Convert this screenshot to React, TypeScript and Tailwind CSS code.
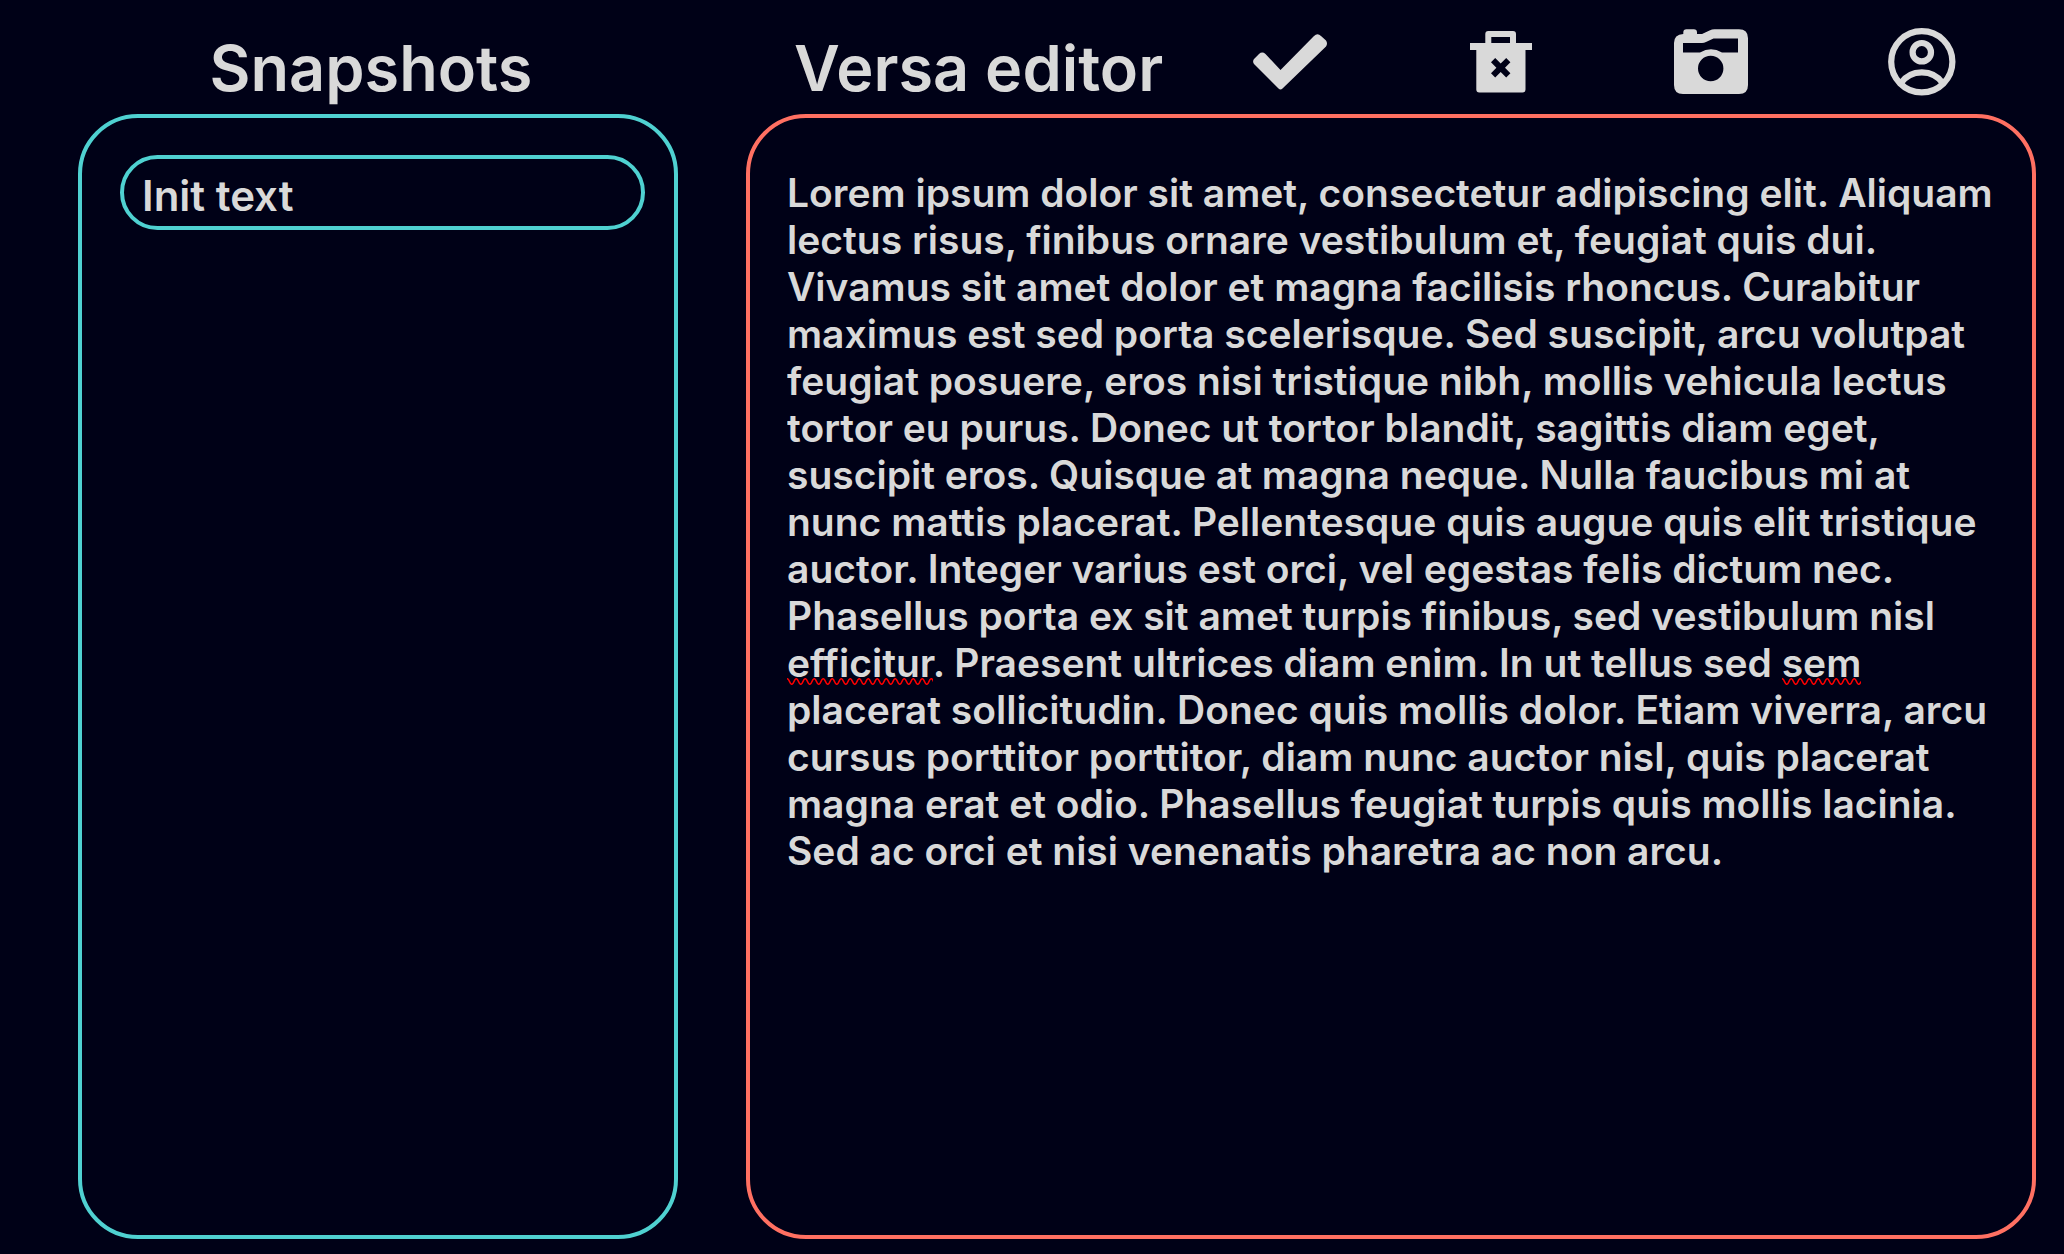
import { useLayoutEffect, useRef, useState } from "react";
import type { ReactNode } from "react";

const INITIAL_TEXT =
  "Lorem ipsum dolor sit amet, consectetur adipiscing elit. Aliquam lectus risus, finibus ornare vestibulum et, feugiat quis dui. Vivamus sit amet dolor et magna facilisis rhoncus. Curabitur maximus est sed porta scelerisque. Sed suscipit, arcu volutpat feugiat posuere, eros nisi tristique nibh, mollis vehicula lectus tortor eu purus. Donec ut tortor blandit, sagittis diam eget, suscipit eros. Quisque at magna neque. Nulla faucibus mi at nunc mattis placerat. Pellentesque quis augue quis elit tristique auctor. Integer varius est orci, vel egestas felis dictum nec. Phasellus porta ex sit amet turpis finibus, sed vestibulum nisl efficitur. Praesent ultrices diam enim. In ut tellus sed sem placerat sollicitudin. Donec quis mollis dolor. Etiam viverra, arcu cursus porttitor porttitor, diam nunc auctor nisl, quis placerat magna erat et odio. Phasellus feugiat turpis quis mollis lacinia. Sed ac orci et nisi venenatis pharetra ac non arcu.";

const MISSPELLED = ["efficitur", "sem"];

type Mark = { left: number; top: number; width: number };

/* Lays the text out in a throwaway copy of the textarea to find where each word sits. */
function measureWords(area: HTMLTextAreaElement, text: string): Mark[] {
  const copy = document.createElement("div");
  copy.className = area.className;
  copy.style.position = "absolute";
  copy.style.visibility = "hidden";
  copy.style.whiteSpace = "pre-wrap";
  copy.style.width = `${area.clientWidth}px`;
  copy.textContent = text;
  area.parentElement!.appendChild(copy);
  const origin = copy.getBoundingClientRect();
  const node = copy.firstChild;
  const marks: Mark[] = [];
  if (node) {
    for (const word of MISSPELLED) {
      const match = new RegExp(`\\b${word}\\b`).exec(text);
      if (!match) continue;
      const range = document.createRange();
      range.setStart(node, match.index);
      range.setEnd(node, match.index + word.length);
      const box = range.getBoundingClientRect();
      marks.push({ left: box.left - origin.left, top: box.bottom - origin.top, width: box.width });
    }
  }
  copy.remove();
  return marks;
}

function Squiggle({ mark }: { mark: Mark }) {
  const waves = Array.from({ length: Math.ceil(mark.width / 9) }, () => "q2.25 -5.5 4.5 0 t4.5 0").join(" ");
  return (
    <svg
      aria-hidden="true"
      className="pointer-events-none absolute -mt-2 h-[7px]"
      style={{ left: mark.left, top: mark.top, width: mark.width }}
    >
      <path d={`M-2 3.5 ${waves}`} fill="none" stroke="#f00" strokeWidth="1.6" />
    </svg>
  );
}

function Editor() {
  const [text, setText] = useState(INITIAL_TEXT);
  const [marks, setMarks] = useState<Mark[]>([]);
  const ref = useRef<HTMLTextAreaElement>(null);

  useLayoutEffect(() => {
    const update = () => ref.current && setMarks(measureWords(ref.current, text));
    update();
    window.addEventListener("resize", update);
    return () => window.removeEventListener("resize", update);
  }, [text]);

  return (
    <div className="relative flex flex-1">
      <textarea
        ref={ref}
        aria-label="Versa editor"
        spellCheck={false}
        value={text}
        onChange={(e) => setText(e.target.value)}
        className="block w-full resize-none bg-transparent text-[39px] leading-[47px] font-semibold outline-none [font-variant-ligatures:none]"
      />
      {marks.map((mark, i) => (
        <Squiggle key={i} mark={mark} />
      ))}
    </div>
  );
}

function IconButton({ label, children }: { label: string; children: ReactNode }) {
  return (
    <button type="button" aria-label={label} className="flex cursor-pointer justify-center">
      <svg viewBox="0 0 100 90" className="h-[90px] w-[100px]" fill="currentColor" aria-hidden="true">
        {children}
      </svg>
    </button>
  );
}

function Toolbar() {
  return (
    <div className="grid flex-1 grid-cols-4 pt-5">
      <IconButton label="Confirm">
        <path d="M15 44Q13.2 41.5 15 39L20 34Q23.2 31.2 26.5 34L41.5 50L75 16Q78.5 12.6 82 16L87 20.5Q89 23.5 87 26.5L43.5 68.5Q41.5 70.5 39.5 68.5Z" />
      </IconButton>
      <IconButton label="Delete">
        <path
          fillRule="evenodd"
          d="M38.3 11H63Q66 11 66 14V23H82V30H75.5V69.5Q75.5 72.5 72.5 72.5H29.3Q26.3 72.5 26.3 69.5V30H20V23H35.3V14Q35.3 11 38.3 11ZM41.3 17V23H60V17ZM45.2 38L50.7 43.4L56.2 38L60.4 42.2L55 47.7L60.4 53.2L56.2 57.4L50.7 52L45.2 57.4L41 53.2L46.4 47.7L41 42.2Z"
        />
      </IconButton>
      <IconButton label="Take snapshot">
        <path
          fillRule="evenodd"
          d="M23.3 14V12.5Q23.3 9.3 26.5 9.3H33.8Q37 9.3 37 12.5V14H42L49.5 10.5Q52 9.3 54.5 9.3H79Q88 9.3 88 18.3V65Q88 74 79 74H23Q14 74 14 65V23Q14 14.5 23.3 14ZM23 23V32.5H40Q51 26 62 32.5H78V18.5H53.5L46 22Q44 23 42 23ZM50.7 35.8A12.7 12.7 0 1 0 50.7 61.2A12.7 12.7 0 1 0 50.7 35.8Z"
        />
      </IconButton>
      <IconButton label="Account">
        <g fill="none" stroke="currentColor" strokeWidth="6.2">
          <circle cx="50.8" cy="41.8" r="30.6" />
          <circle cx="50.8" cy="32.2" r="9.2" />
          <path d="M29.5 63.5A26 26 0 0 1 72.1 63.5" />
        </g>
      </IconButton>
    </div>
  );
}

export default function App() {
  return (
    <main className="grid h-screen grid-cols-[600fr_1290fr] gap-x-[68px] bg-[#000117] pr-7 pb-[15px] pl-[78px] font-['Inter',sans-serif] text-[#d9d9d9]">
      <section className="flex min-h-0 flex-col">
        <h1 className="h-[114px] pt-7 pr-3.5 text-center text-[63px] leading-20 font-semibold">Snapshots</h1>
        <div className="flex-1 rounded-[60px] border-4 border-[#4fd1d1] pt-[37px] pr-[29px] pl-[38px]">
          <button
            type="button"
            className="flex h-[75px] w-full cursor-pointer items-center rounded-full border-4 border-[#4fd1d1] px-[18px] pt-1.5 text-[42px] font-semibold"
          >
            Init text
          </button>
        </div>
      </section>
      <section className="flex min-h-0 flex-col">
        <header className="flex h-[114px] pr-[10px]">
          <h2 className="w-[438px] pt-7 pl-12 text-[63px] leading-20 font-semibold whitespace-nowrap">Versa editor</h2>
          <Toolbar />
        </header>
        <div className="flex flex-1 rounded-[60px] border-4 border-[#ff7062] pt-[51px] pr-8 pb-8 pl-[37px]">
          <Editor />
        </div>
      </section>
    </main>
  );
}
